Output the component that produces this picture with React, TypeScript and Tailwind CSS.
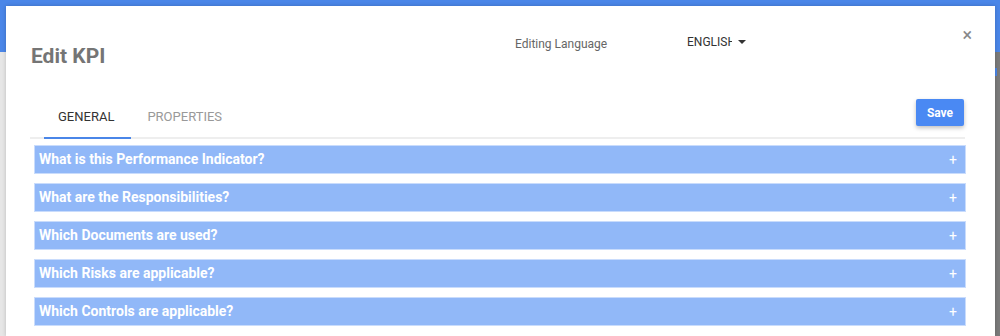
import React from "react";

const rows = [
  "What is this Performance Indicator?",
  "What are the Responsibilities?",
  "Which Documents are used?",
  "Which Risks are applicable?",
  "Which Controls are applicable?",
];

export default function App() {
  return (
    <div
      className="relative w-[1000px] h-[336px] overflow-hidden bg-[#e6e6e6]"
      style={{ fontFamily: "Roboto, 'Liberation Sans', sans-serif" }}
    >
      {/* background app */}
      <div className="h-[52px] bg-[#4a86e8]" />
      <div className="absolute right-0 top-[52px] bottom-0 w-[5px] bg-[#7a7a7a]">
        <div className="mt-[16px] h-[8px] w-[2px] bg-[#4a86e8]" />
      </div>

      {/* modal */}
      <div className="absolute left-[6px] top-[6px] w-[989px] bottom-0 bg-white shadow-[0_0_4px_rgba(0,0,0,0.2)]">
        {/* header */}
        <div className="flex h-[89px] items-start pl-[25px]">
          <h1 className="mt-[36px] w-[484px] text-[21px] leading-[28px] font-bold text-[#757575]">
            Edit KPI
          </h1>
          <div className="mt-[30px] w-[172px] text-[12px] leading-[16px] text-[#666]">
            Editing Language
          </div>
          <div className="mt-[28px] flex items-center">
            <span className="block w-[45px] overflow-hidden whitespace-nowrap text-[12px] leading-[16px] text-[#333]">
              ENGLISH
            </span>
            <span className="ml-[6px] inline-block h-0 w-0 border-l-[4px] border-r-[4px] border-t-[4px] border-l-transparent border-r-transparent border-t-[#333]" />
          </div>
          <div className="ml-auto mr-[23px] mt-[20px] text-[18px] leading-[18px] text-[#888]">
            ×
          </div>
        </div>

        {/* tabs */}
        <div className="ml-[24px] flex h-[44px] w-[935px] items-end border-b-2 border-[#eeeeee]">
          <div className="ml-[14px] -mb-[2px] border-b-2 border-[#4a86e8] pl-[14px] pr-[17px] pb-[12px] text-[13px] leading-[16px] text-[#333]">
            GENERAL
          </div>
          <div className="px-[16px] pb-[12px] text-[13px] leading-[16px] text-[#999]">
            PROPERTIES
          </div>
          <button className="mb-[11px] ml-auto mr-[1px] h-[27px] w-[48px] rounded-[2px] bg-[#4a89f3] text-[12px] font-bold text-white shadow-[0_2px_4px_rgba(0,0,0,0.25)]">
            Save
          </button>
        </div>

        {/* accordion */}
        <div className="ml-[28px] mt-[6px] flex w-[932px] flex-col gap-[9px]">
          {rows.map((r) => (
            <div
              key={r}
              className="flex h-[29px] items-center justify-between border border-[#c9dcfc] bg-[#91b8f8] pl-[4px] pr-[8px] text-[14px] font-bold text-white"
            >
              <span>{r}</span>
              <span className="text-[14px] font-normal leading-none">+</span>
            </div>
          ))}
        </div>
      </div>
    </div>
  );
}
